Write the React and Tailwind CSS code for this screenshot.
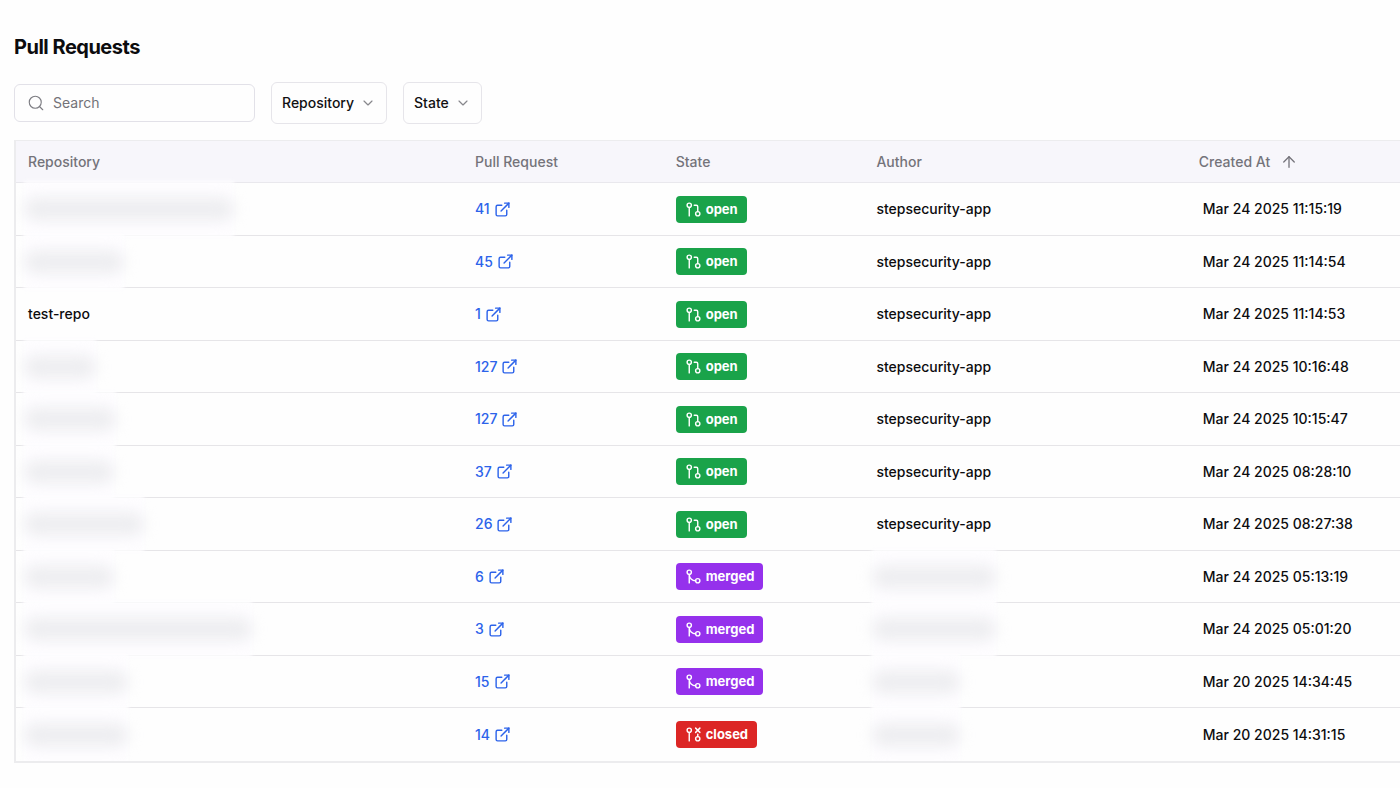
import React, { useState } from 'react';
import {
  ArrowUp,
  ChevronDown,
  ExternalLink,
  GitMerge,
  GitPullRequest,
  GitPullRequestClosed,
  Search,
} from 'lucide-react';

// redacted values are stored as the width of the blurred bar
const pullRequests = [
  { repoWidth: 210, number: 41, state: 'open', author: 'stepsecurity-app', createdAt: 'Mar 24 2025 11:15:19' },
  { repoWidth: 100, number: 45, state: 'open', author: 'stepsecurity-app', createdAt: 'Mar 24 2025 11:14:54' },
  { repo: 'test-repo', number: 1, state: 'open', author: 'stepsecurity-app', createdAt: 'Mar 24 2025 11:14:53' },
  { repoWidth: 72, number: 127, state: 'open', author: 'stepsecurity-app', createdAt: 'Mar 24 2025 10:16:48' },
  { repoWidth: 92, number: 127, state: 'open', author: 'stepsecurity-app', createdAt: 'Mar 24 2025 10:15:47' },
  { repoWidth: 90, number: 37, state: 'open', author: 'stepsecurity-app', createdAt: 'Mar 24 2025 08:28:10' },
  { repoWidth: 120, number: 26, state: 'open', author: 'stepsecurity-app', createdAt: 'Mar 24 2025 08:27:38' },
  { repoWidth: 90, number: 6, state: 'merged', authorWidth: 124, createdAt: 'Mar 24 2025 05:13:19' },
  { repoWidth: 228, number: 3, state: 'merged', authorWidth: 124, createdAt: 'Mar 24 2025 05:01:20' },
  { repoWidth: 104, number: 15, state: 'merged', authorWidth: 88, createdAt: 'Mar 20 2025 14:34:45' },
  { repoWidth: 104, number: 14, state: 'closed', authorWidth: 88, createdAt: 'Mar 20 2025 14:31:15' },
];

const states = {
  open: { icon: GitPullRequest, color: 'bg-[#1aa34a]' },
  merged: { icon: GitMerge, color: 'bg-[#9531ec]' },
  closed: { icon: GitPullRequestClosed, color: 'bg-[#dc2625]' },
};

const StateBadge = ({ state }) => {
  const { icon: Icon, color } = states[state];
  return (
    <span className={`flex h-[27px] w-fit items-center gap-1 rounded px-[9px] text-[13px] font-bold text-white ${color}`}>
      <Icon size={17} strokeWidth={2} />
      {state}
    </span>
  );
};

// the pale layer also fades out the row borders above and below the bar
const Redacted = ({ width }) => (
  <span className="relative -ml-1 block h-6" style={{ width }}>
    <span className="absolute inset-x-0 -inset-y-4 bg-[#fefdff] blur-[2px]" />
    <span className="absolute inset-0 rounded-full bg-[#eeeef1] blur-[7px]" />
  </span>
);

const FilterButton = ({ children }) => (
  <button
    type="button"
    className="flex h-[42px] items-center gap-1.5 rounded-md border border-[#e6e5ea] px-2.5 text-sm font-medium text-[#111113]"
  >
    {children}
    <ChevronDown size={16} strokeWidth={1.75} className="text-[#87878c]" />
  </button>
);

const App = () => {
  const [query, setQuery] = useState('');
  const rows = pullRequests.filter((pr) => (pr.repo || '').includes(query));

  return (
    <main className="min-h-screen bg-[#fefefe] pt-[33px] pb-6 pl-3.5 font-['Inter',sans-serif] text-[#0c0c0e]">
      <h1 className="text-xl leading-7 font-bold tracking-tight">Pull Requests</h1>

      {/* Filters */}
      <div className="mt-[21px] flex items-center gap-4">
        <label className="flex h-[38px] w-[241px] items-center gap-2 rounded-md border border-[#e2e1e8] px-3">
          <Search size={18} strokeWidth={1.5} className="shrink-0 text-[#7c7c82]" />
          <input
            type="text"
            aria-label="Search"
            placeholder="Search"
            value={query}
            onChange={(e) => setQuery(e.target.value)}
            className="w-full min-w-0 bg-transparent text-sm outline-none placeholder:text-[#737278]"
          />
        </label>
        <FilterButton>Repository</FilterButton>
        <FilterButton>State</FilterButton>
      </div>

      <div className="mt-4 overflow-hidden border-t border-b-2 border-l-2 border-[#ececee]">
        <table className="w-full table-fixed border-separate border-spacing-0 text-left text-sm font-medium">
          <thead>
            <tr className="h-[42px] bg-[#f7f6fb] text-[#74737a] *:border-b *:border-[#e9e8ed] *:px-3 *:font-medium">
              <th className="w-[32.3%]">Repository</th>
              <th className="w-[14.5%]">Pull Request</th>
              <th className="w-[14.5%]">State</th>
              <th className="w-[23.3%]">Author</th>
              <th>
                <button type="button" className="flex items-center gap-2.5">
                  Created At
                  <ArrowUp size={18} strokeWidth={1.75} />
                </button>
              </th>
            </tr>
          </thead>
          <tbody>
            {rows.map((pr, i) => (
              <tr
                key={i}
                className="odd:h-[53px] even:h-[52px] *:border-b *:border-[#e6e5e8] *:px-3 last:*:border-b-0"
              >
                <td>{pr.repo || <Redacted width={pr.repoWidth} />}</td>
                <td>
                  <a href="#" className="flex w-fit items-center gap-1 text-[#2c63ea]">
                    {pr.number}
                    <ExternalLink size={17} strokeWidth={2} />
                  </a>
                </td>
                <td>
                  <StateBadge state={pr.state} />
                </td>
                <td>{pr.author || <Redacted width={pr.authorWidth} />}</td>
                <td>
                  <span className="pl-1 whitespace-nowrap">{pr.createdAt}</span>
                </td>
              </tr>
            ))}
          </tbody>
        </table>
      </div>
    </main>
  );
};

export default App;
